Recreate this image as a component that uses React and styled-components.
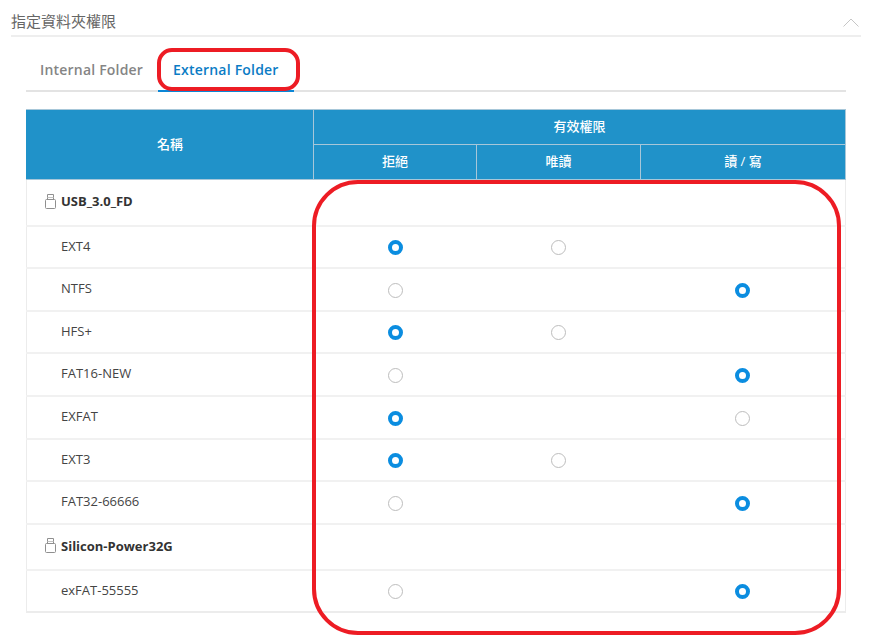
import React from 'react'
import styled, { createGlobalStyle } from 'styled-components'

const GlobalStyle = createGlobalStyle`
  html, body {
    margin: 0;
    padding: 0;
    background: #fff;
  }
  body {
    font-family: "Open Sans", "Noto Sans CJK TC", sans-serif;
  }
`

const Page = styled.div`
  position: relative;
  width: 883px;
  height: 639px;
  overflow: hidden;
  padding: 11px 22px 0 11px;
  box-sizing: border-box;
`

const SectionHead = styled.div`
  display: flex;
  align-items: center;
  justify-content: space-between;
  height: 24px;
  padding-right: 2px;
  border-bottom: 2px solid #eeeeee;
`

const SectionTitle = styled.div`
  font-size: 15px;
  line-height: 20px;
  margin-bottom: 4px;
  color: #666;
`

const Chevron = styled.svg`
  width: 16px;
  height: 9px;
  margin-bottom: 1px;
`

const Body = styled.div`
  padding: 0 15px;
`

const Tabs = styled.div`
  display: flex;
  height: 55px;
  border-bottom: 2px solid #e3e3e3;
  box-sizing: border-box;
`

const Tab = styled.div`
  padding: 12px 15px 0 ${p => (p.$active ? '15px' : '14px')};
  margin-bottom: -2px;
  height: 55px;
  box-sizing: border-box;
  display: flex;
  align-items: center;
  font-size: 14px;
  font-weight: 600;
  letter-spacing: 0.2px;
  color: ${p => (p.$active ? '#0b7cc5' : '#858585')};
  border-bottom: 2px solid ${p => (p.$active ? '#0b86d6' : 'transparent')};
`

const Table = styled.table`
  width: 819px;
  margin-top: 17px;
  border-collapse: collapse;
  table-layout: fixed;
  font-size: 13px;
`

const HeadCell = styled.th`
  height: ${p => p.$h || 34}px;
  padding: 0 0 ${p => (p.$first ? '2px' : '3px')};
  box-sizing: border-box;
  background: #2092c9;
  color: #fff;
  font-size: 13px;
  font-weight: 500;
  text-align: center;
  border: 1px solid #a7c7d9;
  border-left-color: ${p => (p.$first ? '#2092c9' : '#c3d5de')};
`

const Row = styled.tr`
  height: ${p => p.$h}px;
  border-bottom: 2px solid #f1f1f1;
  &:last-child {
    border-bottom: 2px solid #ececec;
  }
`

const NameCell = styled.td`
  padding: 0 0 2px 34px;
  box-sizing: border-box;
  color: #444;
  font-size: 13px;
  border-left: 1px solid #ececec;
`

const GroupCell = styled.td`
  padding: 0 0 2px 18px;
  box-sizing: border-box;
  border-left: 1px solid #ececec;
  border-right: 1px solid #ececec;
`

const GroupLabel = styled.div`
  display: flex;
  align-items: center;
  gap: 5px;
  font-size: 13px;
  font-weight: 700;
  color: #333;
`

const OptionCell = styled.td`
  padding: 2px 0 0;
  box-sizing: border-box;
  border-right: ${p => (p.$last ? '1px solid #ececec' : '0')};
`

const Radio = styled.span`
  display: block;
  margin: 0 auto;
  width: 15px;
  height: 15px;
  box-sizing: border-box;
  border-radius: 50%;
  background: #fff;
  border: ${p => (p.$on ? '4px solid #0b8de0' : '1px solid #bdbdbd')};
`

const Callout = styled.div`
  position: absolute;
  left: ${p => p.$x}px;
  top: ${p => p.$y}px;
  width: ${p => p.$w}px;
  height: ${p => p.$h}px;
  box-sizing: border-box;
  border: 4px solid #ed1c24;
  border-radius: ${p => p.$r}px;
  pointer-events: none;
`

const UsbIcon = () => (
  <svg width="11" height="15" viewBox="0 0 11 15" fill="none" stroke="#8f8f8f" strokeWidth="1">
    <path d="M2.5 5.5V0.5h6v5" />
    <rect x="0.5" y="5.5" width="10" height="9" rx="1" />
    <path d="M2.5 3.5h6" stroke="#c4c4c4" />
  </svg>
)

// null = that option is not offered, the cell stays empty
const rows = [
  { group: 'USB_3.0_FD', h: 46 },
  { name: 'EXT4', opts: [true, false, null], h: 42 },
  { name: 'NTFS', opts: [false, null, true], h: 43 },
  { name: 'HFS+', opts: [true, false, null], h: 42 },
  { name: 'FAT16-NEW', opts: [false, null, true], h: 43 },
  { name: 'EXFAT', opts: [true, null, false], h: 43 },
  { name: 'EXT3', opts: [true, false, null], h: 42 },
  { name: 'FAT32-66666', opts: [false, null, true], h: 43 },
  { group: 'Silicon-Power32G', h: 46 },
  { name: 'exFAT-55555', opts: [false, null, true], h: 42 },
]

export default function App() {
  return (
    <Page>
      <GlobalStyle />
      <SectionHead>
        <SectionTitle>指定資料夾權限</SectionTitle>
        <Chevron viewBox="0 0 16 9" fill="none" stroke="#c6c6c6" strokeWidth="1">
          <path d="M0.5 8.5L8 1l7.5 7.5" />
        </Chevron>
      </SectionHead>
      <Body>
        <Tabs>
          <Tab>Internal Folder</Tab>
          <Tab $active>External Folder</Tab>
        </Tabs>
        <Table>
          <colgroup>
            <col width="287" />
            <col width="163" />
            <col width="164" />
            <col width="205" />
          </colgroup>
          <thead>
            <tr>
              <HeadCell rowSpan={2} $first>名稱</HeadCell>
              <HeadCell colSpan={3} $h={35}>有效權限</HeadCell>
            </tr>
            <tr>
              <HeadCell $h={35}>拒絕</HeadCell>
              <HeadCell $h={35}>唯讀</HeadCell>
              <HeadCell $h={35}>讀 / 寫</HeadCell>
            </tr>
          </thead>
          <tbody>
            {rows.map(r =>
              r.group ? (
                <Row key={r.group} $h={r.h}>
                  <GroupCell colSpan={4}>
                    <GroupLabel>
                      <UsbIcon />
                      {r.group}
                    </GroupLabel>
                  </GroupCell>
                </Row>
              ) : (
                <Row key={r.name} $h={r.h}>
                  <NameCell>{r.name}</NameCell>
                  {r.opts.map((o, i) => (
                    <OptionCell key={i} $last={i === 2}>
                      {o !== null && <Radio $on={o} />}
                    </OptionCell>
                  ))}
                </Row>
              )
            )}
          </tbody>
        </Table>
      </Body>
      <Callout $x={157} $y={48} $w={143} $h={43} $r={15} />
      <Callout $x={312} $y={180} $w={529} $h={455} $r={46} />
    </Page>
  )
}
